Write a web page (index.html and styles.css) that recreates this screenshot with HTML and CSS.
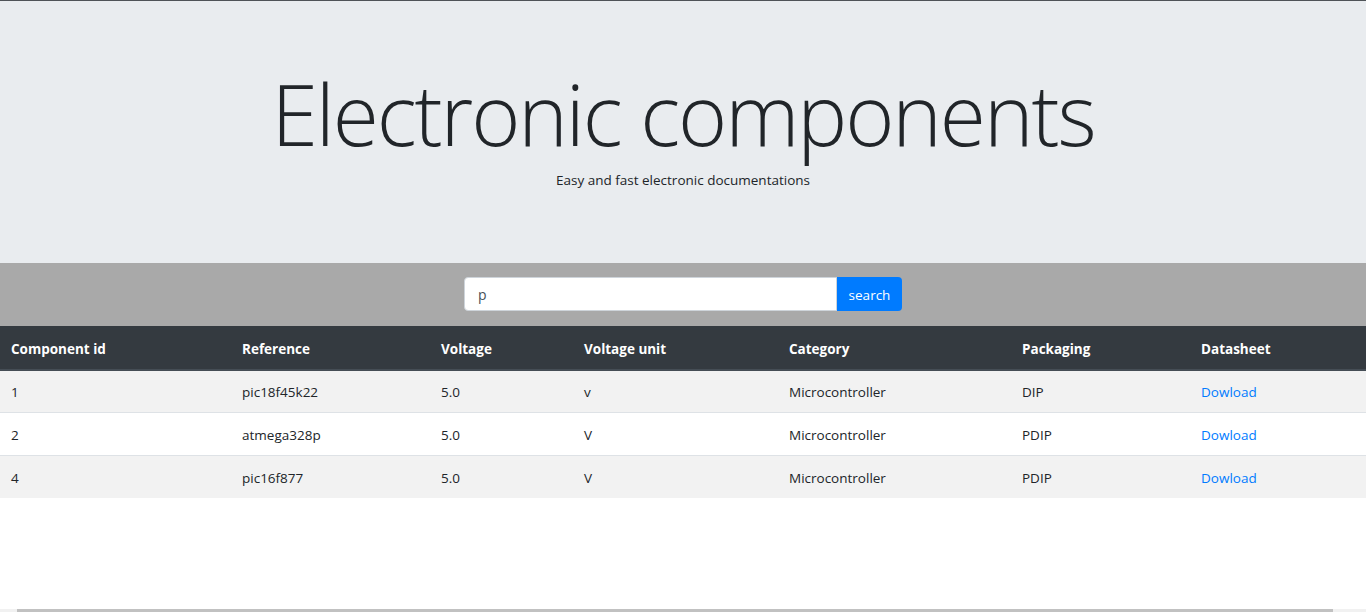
FILE: index.html
```html
<!DOCTYPE html>
<html lang="en">
<head>
<meta charset="utf-8">
<title>Electronic components</title>
<link rel="stylesheet" href="styles.css">
</head>
<body>
<header class="hero">
  <h1 class="hero-title">Electronic components</h1>
  <p class="hero-sub">Easy and fast electronic documentations</p>
</header>
<form class="search-band">
  <input class="search-input" type="text" value="p">
  <button class="search-btn" type="button">search</button>
</form>
<table class="grid">
  <colgroup>
    <col class="c1"><col class="c2"><col class="c3"><col class="c4"><col class="c5"><col class="c6"><col class="c7">
  </colgroup>
  <thead>
    <tr>
      <th>Component id</th><th>Reference</th><th>Voltage</th><th>Voltage unit</th><th>Category</th><th>Packaging</th><th>Datasheet</th>
    </tr>
  </thead>
  <tbody>
    <tr class="odd"><td>1</td><td>pic18f45k22</td><td>5.0</td><td>v</td><td>Microcontroller</td><td>DIP</td><td><a href="#">Dowload</a></td></tr>
    <tr><td>2</td><td>atmega328p</td><td>5.0</td><td>V</td><td>Microcontroller</td><td>PDIP</td><td><a href="#">Dowload</a></td></tr>
    <tr class="odd"><td>4</td><td>pic16f877</td><td>5.0</td><td>V</td><td>Microcontroller</td><td>PDIP</td><td><a href="#">Dowload</a></td></tr>
  </tbody>
</table>
<div class="hscroll"><div class="hscroll-thumb"></div></div>
</body>
</html>
```
FILE: styles.css
```css
* { box-sizing: border-box; }
html, body { margin: 0; padding: 0; }
body {
  font-family: "Open Sans", "Noto Sans", sans-serif;
  font-size: 13.5px;
  color: #212529;
  background: #fff;
  border-top: 1px solid #4f5357;
}
.hero {
  background: #e9ecef;
  height: 262px;
  display: flex;
  flex-direction: column;
  align-items: center;
  padding-top: 71px;
}
.hero-title {
  margin: 0;
  font-weight: 300;
  font-size: 84px;
  line-height: 84px;
  letter-spacing: -2.1px;
}
.hero-sub {
  margin: 15px 0 0;
  font-size: 13.5px;
  line-height: 18px;
}
.search-band {
  margin: 0;
  background: #a9a9a9;
  height: 63px;
  display: flex;
  justify-content: center;
  align-items: flex-start;
  padding-top: 14px;
}
.search-input {
  width: 373px;
  height: 34px;
  border: 1px solid #ced4da;
  border-radius: 4px 0 0 4px;
  padding: 1px 13px 0;
  font: inherit;
  font-size: 14px;
  color: #495057;
  background: #fff;
}
.search-btn {
  width: 65px;
  height: 34px;
  border: 0;
  border-radius: 0 4px 4px 0;
  background: #007bff;
  color: #fff;
  font: inherit;
  font-size: 13.5px;
  padding-top: 2px;
}
.grid {
  width: 100%;
  border-collapse: collapse;
  table-layout: fixed;
}
.c1 { width: 231px; } .c2 { width: 199px; } .c3 { width: 143px; } .c4 { width: 205px; }
.c5 { width: 233px; } .c6 { width: 179px; } .c7 { width: 176px; }
.grid th {
  background: #343a40;
  color: #fff;
  text-align: left;
  font-weight: 700;
  height: 44px;
  padding: 2px 11px 0;
  border-bottom: 2px solid #454d55;
}
.grid td {
  height: 43px;
  padding: 2px 11px 0;
  border-top: 1px solid #dee2e6;
}
.grid tbody tr:first-child td { border-top: 0; height: 42px; }
.grid tr.odd td { background: #f2f2f2; }
.grid a { color: #007bff; text-decoration: none; }
.hscroll {
  position: fixed;
  left: 0; right: 0; bottom: 0;
  height: 3px;
  background: #f1f1f1;
  padding: 0 33px 0 17px;
}
.hscroll-thumb { height: 100%; background: #c1c1c1; }
```
